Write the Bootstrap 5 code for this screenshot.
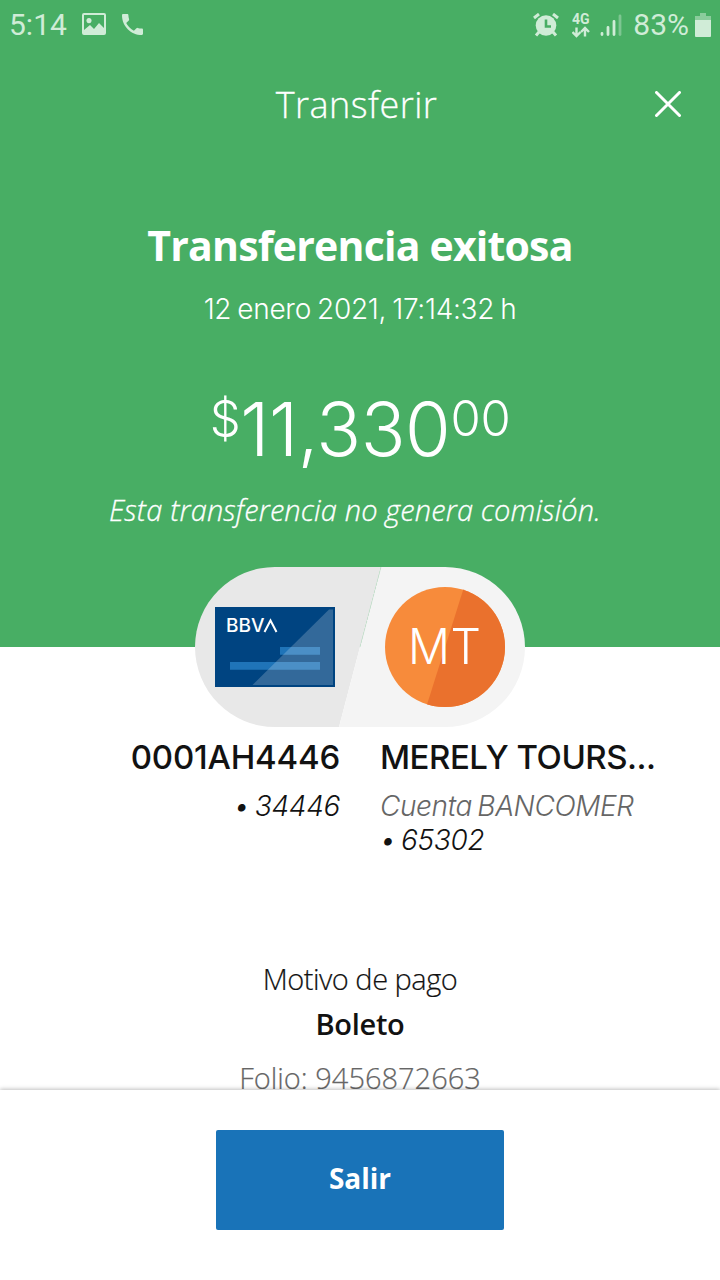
<!DOCTYPE html>
<html lang="es">
<head>
<meta charset="utf-8">
<meta name="viewport" content="width=device-width, initial-scale=1">
<title>Transferir</title>
<link href="https://cdn.jsdelivr.net/npm/bootstrap@5.3.0/dist/css/bootstrap.min.css" rel="stylesheet">
<style>
  body { font-family: "Open Sans", "Noto Sans", sans-serif; color: #121212; background: #fff; }
  .screen { width: 720px; height: 1280px; }
  .hero { height: 647px; background: #48ae64; }
  .statusbar { height: 50px; font-family: Roboto, sans-serif; font-size: 30px; line-height: 50px; color: #d0ecd7; padding: 0 9px 0 9px; }
  .titlebar { height: 106px; display: grid; grid-template-columns: 104px 1fr 104px; padding-top: 2px; }
  .titlebar h1 { font-size: 36px; font-weight: 300; letter-spacing: .5px; margin: 1px 0 0 -7px; -webkit-text-stroke: .3px; }
  .result { font-size: 41px; line-height: 60px; font-weight: 700; letter-spacing: -.8px; margin-top: 59px; }
  .stamp { font-family: Inter, sans-serif; font-size: 28px; line-height: 40px; font-weight: 300; letter-spacing: -.3px; word-spacing: -1.5px; margin-top: 14px; }
  .amount { font-family: Inter, sans-serif; font-weight: 300; font-size: 74px; line-height: 100px; height: 100px; margin-top: 50px; }
  .amount .major { letter-spacing: -.4px; }
  .amount .minor { font-size: 49px; line-height: 79px; letter-spacing: -.3px; }
  .note { font-size: 29px; line-height: 40px; font-weight: 300; font-style: italic; margin: 11px 0 0 -10px; letter-spacing: .14px; -webkit-text-stroke: .3px; }
  .capsule { width: 330px; height: 160px; margin-top: -80px; }
  .party { font-family: Inter, sans-serif; font-size: 33px; line-height: 40px; font-weight: 500; }
  .acct { font-family: Inter, sans-serif; font-size: 28px; line-height: 34px; font-weight: 300; font-style: italic; letter-spacing: -.3px; word-spacing: -2px; }
  .acct.soft { letter-spacing: -.4px; }
  .p1 { letter-spacing: -.2px; }
  .p2 { letter-spacing: -.5px; }
  .soft { color: #666; }
  .parties { margin-top: 10px; }
  .origin { width: 340px; }
  .detail { font-size: 29px; line-height: 44px; font-weight: 300; margin-top: 100px; -webkit-text-stroke: .2px; }
  .reason { letter-spacing: -.5px; }
  .concept { letter-spacing: -.3px; margin-top: 1px; -webkit-text-stroke: 0; }
  .bottombar { height: 190px; box-shadow: 0 -1px 4px rgba(0,0,0,.25); padding-top: 40px; }
  .btn-exit { width: 288px; height: 100px; border-radius: 2px; border: 0; background: #1973b8; color: #fff; font-size: 28px; font-weight: 700; }
</style>
</head>
<body>
<div class="screen d-flex flex-column overflow-hidden position-relative">
  <header class="hero flex-shrink-0 text-white text-center">
    <div class="statusbar d-flex align-items-center">
      <span class="t-clock">5:14</span>
      <svg style="margin-left:15px;margin-top:-2px" width="24" height="22" viewBox="0 0 24 22" fill="#d0ecd7"><path fill-rule="evenodd" d="M2 0H22Q24 0 24 2V20Q24 22 22 22H2Q0 22 0 20V2Q0 0 2 0ZM2 2V17L8 12L12 16L17 10L22 15V2ZM7 5A2.6 2.6 0 1 1 6.99 5Z"/></svg>
      <svg style="margin-left:16px;margin-top:-1px" width="21" height="21" viewBox="3 3 18 18" fill="#d0ecd7"><path d="M20 15.5c-1.25 0-2.45-.2-3.57-.57a1 1 0 0 0-1.02.24l-2.2 2.2a15.05 15.05 0 0 1-6.59-6.58l2.2-2.21a1 1 0 0 0 .25-1.02A11.4 11.4 0 0 1 8.5 4c0-.55-.45-1-1-1H4c-.55 0-1 .45-1 1 0 9.39 7.61 17 17 17 .55 0 1-.45 1-1v-3.5c0-.55-.45-1-1-1z"/></svg>
      <div class="ms-auto d-flex align-items-center">
        <svg width="26" height="24" viewBox="0 0 26 24" fill="#d0ecd7"><circle cx="13" cy="12.5" r="10.3"/><path d="M1 5L6 1M25 5L20 1M6 19L3 22.5M20 19L23 22.5" stroke="#d0ecd7" stroke-width="3"/><path d="M13 6.5V13.5H18" fill="none" stroke="#48ae64" stroke-width="2.6"/></svg>
        <svg width="20" height="32" viewBox="0 -5 20 32" style="margin-left:13px"><text x="0" y="9.5" style="font-family:Roboto;font-weight:700;font-size:14px" fill="#d0ecd7">4G</text><path d="M4.500 13.500V21.500M.5 18L4.500 22L8.500 18M13 22.500V14.500M9 18L13 14L17 18" fill="none" stroke="#d0ecd7" stroke-width="2.400"/></svg>
        <svg width="22" height="24" viewBox="0 0 22 24" style="margin-left:8px" stroke="#d0ecd7" stroke-width="2.800" stroke-linecap="round"><path d="M2 20.500V21.500M8 14.500V21.500M14 8.500V21.500"/><path d="M20 3V21.500" opacity=".4"/></svg>
        <span class="t-batt" style="margin-left:11px">83%</span>
        <svg width="16" height="24" viewBox="0 0 16 24" style="margin-left:6px;margin-top:-1px"><path d="M5 0H11V3H16V7H0V3H5Z" fill="#8bcc9c"/><path d="M0 7H16V23Q16 24 15 24H1Q0 24 0 23Z" fill="#d0ecd7"/></svg>
      </div>
    </div>
    <div class="titlebar align-items-center">
      <span></span>
      <h1>Transferir</h1>
      <button type="button" class="btn p-0 border-0 lh-1" aria-label="Cerrar"><svg width="26" height="26" viewBox="0 0 26 26" stroke="#fff" stroke-width="3" stroke-linecap="round"><path d="M1.500 1.500L24.500 24.500M24.500 1.500L1.500 24.500"/></svg></button>
    </div>
    <h2 class="result mb-0"><span>Transferencia exitosa</span></h2>
    <div class="stamp">12 enero 2021, 17:14:32 h</div>
    <div class="amount d-flex justify-content-center"><span class="minor">$</span><span class="major">11,330</span><span class="minor cents">00</span></div>
    <div class="note">Esta transferencia no genera comisión.</div>
  </header>
  <svg class="capsule mx-auto flex-shrink-0 position-relative" viewBox="0 0 330 160">
    <defs><clipPath id="pill"><rect width="330" height="160" rx="80"/></clipPath><clipPath id="disc"><circle cx="250" cy="80" r="60"/></clipPath></defs>
    <g clip-path="url(#pill)"><path d="M0 0H186L144 160H0Z" fill="#e8e8e8"/><path d="M186 0H330V160H144Z" fill="#f4f4f4"/></g>
    <path d="M186 0L165 80" stroke="#c5dfcc" stroke-width=".6" stroke-dasharray="2 1.500"/>
    <path d="M20 40H140V120H20Z" fill="#004481"/>
    <path d="M85 80H125V87.700H85ZM35 95H125V102.700H35Z" fill="#1f74b8"/>
    <path d="M134 42.500H138V118H57.500Z" fill="#fff" opacity=".2"/>
    <text x="31" y="65" font-size="18" font-weight="500" fill="#fff" textLength="38.500" lengthAdjust="spacingAndGlyphs" style="font-family:Inter">BBV</text><path d="M69.500 65L75.500 53.500L81.500 65" fill="none" stroke="#fff" stroke-width="2"/>
    <g font-size="49" font-weight="300" fill="#fff" style="font-family:Inter"><g clip-path="url(#disc)"><path d="M190 20H310V140H190Z" fill="#f78b3b"/><path d="M270 17L230 144H310V17Z" fill="#ea712d"/></g><text x="213" y="97" textLength="42" lengthAdjust="spacingAndGlyphs">M</text><text x="255.500" y="97" textLength="30.500" lengthAdjust="spacingAndGlyphs">T</text></g>
  </svg>
  <main class="flex-grow-1">
    <div class="parties d-flex">
      <div class="origin text-end"><div class="party p1">0001AH4446</div><div class="acct mt-2 pt-1">• 34446</div></div>
      <div class="target ms-4 ps-3"><div class="party p2">MERELY TOURS...</div><div class="acct mt-2 pt-1 soft">Cuenta BANCOMER</div><div class="acct">• 65302</div></div>
    </div>
    <div class="detail text-center">
      <div class="reason">Motivo de pago</div>
      <div class="concept fw-semibold">Boleto</div>
      <div class="soft folio" style="margin-top:10px">Folio: 9456872663</div>
    </div>
  </main>
  <footer class="bottombar position-absolute bottom-0 w-100 bg-white d-flex justify-content-center align-items-start">
    <button type="button" class="btn btn-exit p-0 pb-1">Salir</button>
  </footer>
</div>
<script src="https://cdn.jsdelivr.net/npm/bootstrap@5.3.0/dist/js/bootstrap.bundle.min.js"></script>
</body>
</html>
